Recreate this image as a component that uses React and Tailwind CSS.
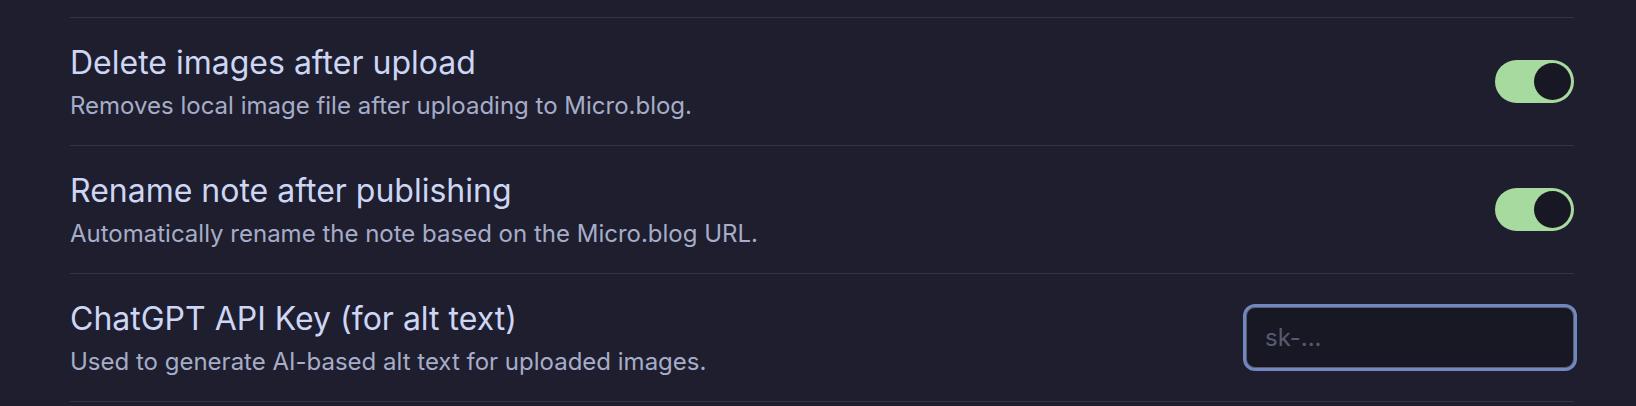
import { useState } from "react";

const ROWS = [
  {
    id: "delete",
    name: "Delete images after upload",
    desc: "Removes local image file after uploading to Micro.blog.",
    type: "toggle"
  },
  {
    id: "rename",
    name: "Rename note after publishing",
    desc: "Automatically rename the note based on the Micro.blog URL.",
    type: "toggle"
  },
  {
    id: "apikey",
    name: "ChatGPT API Key (for alt text)",
    desc: "Used to generate AI-based alt text for uploaded images.",
    type: "text"
  }
];

function Toggle({ on, onChange }) {
  return (
    <button
      type="button"
      onClick={() => onChange(!on)}
      className={`flex h-[43px] w-[79px] shrink-0 items-center rounded-full p-[3px] ${
        on ? "justify-end bg-[#a6da9e]" : "justify-start bg-[#45475a]"
      }`}
    >
      <span className="block h-[37px] w-[37px] rounded-full bg-[#181825]" />
    </button>
  );
}

function SettingRow({ row, value, onChange }) {
  return (
    <div className="flex h-[128px] items-center border-t border-[#33344a]">
      <div className="flex-1 pt-[2px]">
        <div className="text-[32px] leading-[40px] text-[#cdd6f4]">{row.name}</div>
        <div className="mt-[7px] text-[24px] leading-[32px] text-[#a6adc8]">{row.desc}</div>
      </div>
      {row.type === "toggle" ? (
        <Toggle on={value} onChange={onChange} />
      ) : (
        <input
          type="text"
          value={value}
          onChange={(e) => onChange(e.target.value)}
          placeholder="sk-..."
          className="h-[61px] w-[328px] rounded-[9px] border border-[#5b5d72] bg-[#181825] px-[18px] text-[24px] text-[#cdd6f4] placeholder-[#585b70] shadow-[0_0_0_3px_#7187c0] outline-none"
        />
      )}
    </div>
  );
}

export default function App() {
  const [values, setValues] = useState({ delete: true, rename: true, apikey: "" });

  return (
    <div
      className="h-[406px] w-full bg-[#1e1e2e] pt-[17px] pl-[70px] pr-[62px]"
      style={{ fontFamily: "Inter, 'Noto Sans', sans-serif" }}
    >
      {ROWS.map((row) => (
        <SettingRow
          key={row.id}
          row={row}
          value={values[row.id]}
          onChange={(v) => setValues((prev) => ({ ...prev, [row.id]: v }))}
        />
      ))}
      <div className="border-t border-[#33344a]" />
    </div>
  );
}
